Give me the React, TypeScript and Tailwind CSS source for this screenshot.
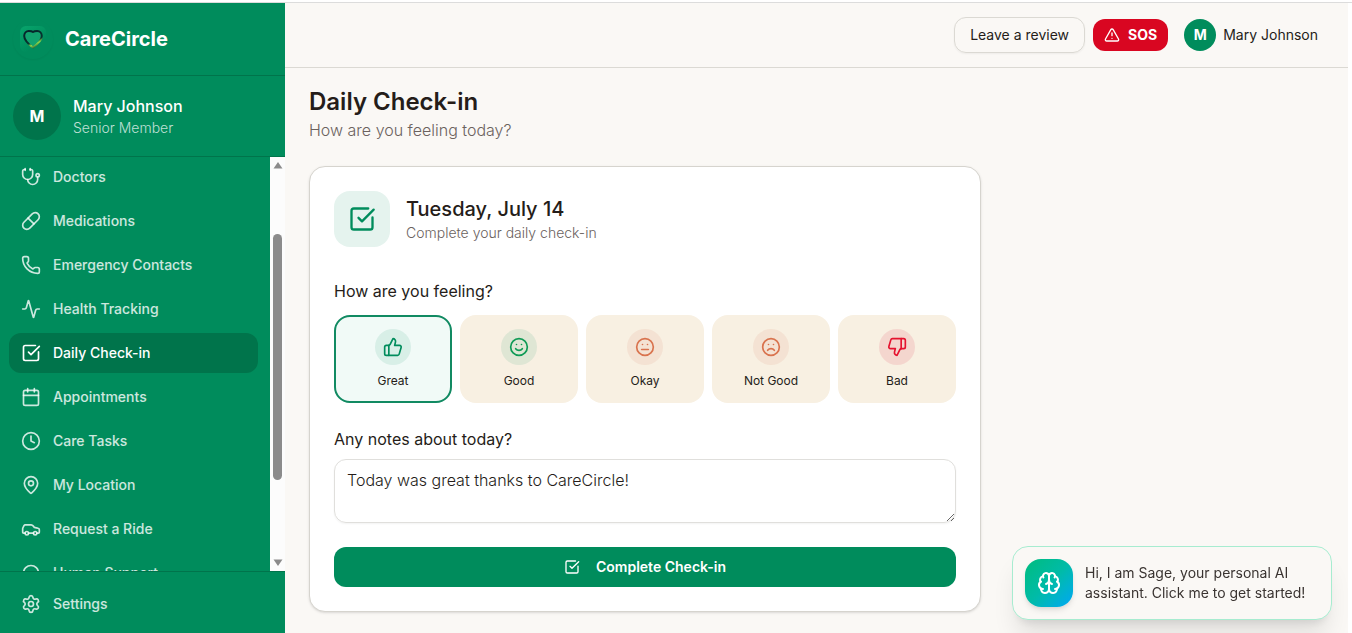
import { useState } from 'react';
import {
  Activity,
  Brain,
  Calendar,
  Car,
  Clock,
  Frown,
  Headphones,
  MapPin,
  Meh,
  Phone,
  Pill,
  Settings,
  Smile,
  SquareCheckBig,
  Stethoscope,
  ThumbsDown,
  ThumbsUp,
  TriangleAlert,
} from 'lucide-react';

const NAV_ITEMS = [
  { label: 'Doctors', icon: Stethoscope },
  { label: 'Medications', icon: Pill },
  { label: 'Emergency Contacts', icon: Phone },
  { label: 'Health Tracking', icon: Activity },
  { label: 'Daily Check-in', icon: SquareCheckBig, active: true },
  { label: 'Appointments', icon: Calendar },
  { label: 'Care Tasks', icon: Clock },
  { label: 'My Location', icon: MapPin },
  { label: 'Request a Ride', icon: Car },
  { label: 'Human Support', icon: Headphones },
];

const MOODS = [
  { label: 'Great', icon: ThumbsUp, tint: 'bg-[#008c5c]/10 text-[#008c5c]' },
  { label: 'Good', icon: Smile, tint: 'bg-[#008c5c]/10 text-[#0f9a55]' },
  { label: 'Okay', icon: Meh, tint: 'bg-[#d9704a]/10 text-[#d9734e]' },
  { label: 'Not Good', icon: Frown, tint: 'bg-[#d9704a]/10 text-[#d9734e]' },
  { label: 'Bad', icon: ThumbsDown, tint: 'bg-[#e11d3f]/12 text-[#e5132f]' },
];

function Logo() {
  return (
    <div className="flex size-10 items-center justify-center rounded-full shadow-xs">
      <svg viewBox="0 0 26 26" className="size-[26px]" aria-hidden="true">
        <defs>
          <linearGradient id="tile" x1="0" y1="0" x2="0.7" y2="1">
            <stop offset="0" stopColor="#08a56c" />
            <stop offset="0.8" stopColor="#008c5c" />
          </linearGradient>
          <linearGradient id="heart" x1="0.3" y1="0" x2="0.8" y2="1">
            <stop offset="0" stopColor="#06242a" />
            <stop offset="0.6" stopColor="#07352f" />
            <stop offset="0.75" stopColor="#8fdc4a" />
            <stop offset="1" stopColor="#0b3a30" />
          </linearGradient>
        </defs>
        <rect width="26" height="26" rx="6" fill="url(#tile)" />
        <path
          d="M13 21.5C8.4 18 4.2 14.6 4.2 9.9C4.2 7 6.2 4.9 8.8 4.9C10.7 4.9 12.2 5.3 13 6C13.8 5.3 15.3 4.9 17.2 4.9C19.8 4.9 21.8 7 21.8 9.9C21.8 14.6 17.6 18 13 21.5Z"
          fill="#12a36e"
          stroke="url(#heart)"
          strokeWidth="2"
          strokeLinejoin="round"
        />
      </svg>
    </div>
  );
}

function Sidebar() {
  return (
    <aside className="flex w-[285px] shrink-0 flex-col bg-[#008c5c] text-white">
      <div className="flex h-[73px] shrink-0 items-center gap-3 border-b border-[#00744b] pl-[13px]">
        <Logo />
        <span className="text-xl font-bold">CareCircle</span>
      </div>

      <div className="flex h-[81px] shrink-0 items-center gap-3 border-b border-[#00744b] pl-[13px]">
        <div className="flex size-12 items-center justify-center rounded-full bg-[#00744b] text-base font-bold">M</div>
        <div>
          <p className="text-base leading-6 font-medium">Mary Johnson</p>
          <p className="text-sm leading-5 font-light text-white/75">Senior Member</p>
        </div>
      </div>

      <div className="flex min-h-0 flex-1">
        <nav className="flex min-w-0 flex-1 flex-col gap-1 overflow-hidden pr-3 pl-[9px]">
          {NAV_ITEMS.map(({ label, icon: Icon, active }) => (
            <a
              key={label}
              href="#"
              className={
                active
                  ? 'flex h-10 shrink-0 items-center gap-3 rounded-xl bg-[#00744b] px-3 text-sm font-medium text-white'
                  : 'flex h-10 shrink-0 items-center gap-3 rounded-xl px-3 text-sm font-medium text-white/80'
              }
            >
              <Icon className="size-5" />
              {label}
            </a>
          ))}
        </nav>

        {/* Scroll track */}
        <div className="flex w-[15px] flex-col items-center bg-[#fcfcfc] py-[5px]">
          <svg viewBox="0 0 10 7" className="h-[7px] w-[10px] fill-[#8b8b8b]"><path d="M5 0 9.5 6.5H.5Z" /></svg>
          <div className="min-h-0 flex-[65]" />
          <div className="min-h-0 w-[9px] flex-[246] rounded-full bg-[#8b8b8b]" />
          <div className="min-h-0 flex-[79]" />
          <svg viewBox="0 0 10 7" className="h-[7px] w-[10px] fill-[#8b8b8b]"><path d="M5 7 .5.5h9Z" /></svg>
        </div>
      </div>

      <div className="h-[62px] shrink-0 border-t border-[#00744b] py-3 pr-3 pl-[9px]">
        <a href="#" className="flex h-10 items-center gap-3 px-3 text-sm font-medium text-white/80">
          <Settings className="size-5" />
          Settings
        </a>
      </div>
    </aside>
  );
}

function TopBar() {
  return (
    <header className="flex h-[65px] shrink-0 items-center justify-end border-b border-[#dbd9d3] pr-[30px] text-sm">
      <button className="mr-2 h-9 rounded-xl border border-[#dbd9d3] px-[15px] shadow-xs">Leave a review</button>
      <button className="mr-4 flex h-8 items-center gap-2 rounded-xl bg-[#d90621] px-[11px] font-bold text-white">
        <TriangleAlert className="size-4" />
        SOS
      </button>
      <div className="flex items-center gap-[7px]">
        <div className="flex size-8 items-center justify-center rounded-full bg-[#008c5c] font-bold text-white">M</div>
        <span>Mary Johnson</span>
      </div>
    </header>
  );
}

function CheckInCard() {
  const [mood, setMood] = useState('Great');
  const [notes, setNotes] = useState('Today was great thanks to CareCircle!');

  return (
    <section className="max-w-2xl rounded-2xl border border-[#d6d4ce] bg-white p-6 shadow-sm">
      <div className="flex items-center gap-4">
        <div className="flex size-14 items-center justify-center rounded-2xl bg-[#e5f3ee] text-[#008c5c]">
          <SquareCheckBig className="size-7" />
        </div>
        <div>
          <h2 className="text-xl leading-7 font-medium">Tuesday, July 14</h2>
          <p className="text-sm leading-5 font-light text-[#6b625e]">Complete your daily check-in</p>
        </div>
      </div>

      <h3 className="mt-8 text-base leading-6">How are you feeling?</h3>
      <div className="mt-3 grid grid-cols-5 gap-2">
        {MOODS.map(({ label, icon: Icon, tint }) => (
          <button
            key={label}
            aria-pressed={mood === label}
            onClick={() => setMood(label)}
            className={
              mood === label
                ? 'flex h-[88px] flex-col items-center gap-2 rounded-2xl border-2 border-[#118a62] bg-[#f1faf7] pt-3'
                : 'flex h-[88px] flex-col items-center gap-2 rounded-2xl border-2 border-transparent bg-[#f8f0e2] pt-3'
            }
          >
            <span className={`flex size-9 items-center justify-center rounded-full ${tint}`}>
              <Icon className="size-5" />
            </span>
            <span className="text-xs leading-4">{label}</span>
          </button>
        ))}
      </div>

      <label htmlFor="notes" className="mt-6 block text-base leading-6">
        Any notes about today?
      </label>
      <textarea
        id="notes"
        value={notes}
        onChange={(e) => setNotes(e.target.value)}
        className="mt-2 block h-16 w-full rounded-xl border border-[#e0dfdc] px-3 py-2 text-base leading-6 font-light shadow-xs"
      />

      <button className="mt-6 flex h-10 w-full items-center justify-center gap-4 rounded-xl bg-[#008c5c] text-sm font-semibold text-white">
        <SquareCheckBig className="size-4" />
        Complete Check-in
      </button>
    </section>
  );
}

function SageBubble() {
  return (
    <button className="fixed right-5 bottom-[13px] flex w-80 items-center gap-3 rounded-2xl border border-[#a7ecd0] bg-[#faf8f5] p-3 text-left shadow-xl">
      <span className="flex size-12 shrink-0 items-center justify-center rounded-2xl bg-linear-to-br from-[#00bc7d] via-[#00bba7] to-[#00a6f4] text-white shadow-md">
        <Brain className="size-6" />
      </span>
      <span className="text-sm leading-5 text-[#3a3431]">Hi, I am Sage, your personal AI assistant. Click me to get started!</span>
    </button>
  );
}

export default function App() {
  return (
    <div className="flex h-screen flex-col overflow-hidden bg-white pt-0.5 font-['Inter','Liberation_Sans',sans-serif] text-[#251d19]">
      <div className="h-px shrink-0 bg-[#dcdcdc]" />
      <div className="flex min-h-0 flex-1">
        <Sidebar />
        <div className="mr-1 flex min-w-0 flex-1 flex-col bg-[#faf8f5]">
          <TopBar />
          <main className="min-h-0 flex-1 overflow-hidden p-6 pt-[18px]">
            <h1 className="text-2xl leading-8 font-semibold">Daily Check-in</h1>
            <p className="mb-6 text-base leading-6 font-light text-[#6b625e]">How are you feeling today?</p>
            <CheckInCard />
          </main>
        </div>
      </div>
      <SageBubble />
    </div>
  );
}
